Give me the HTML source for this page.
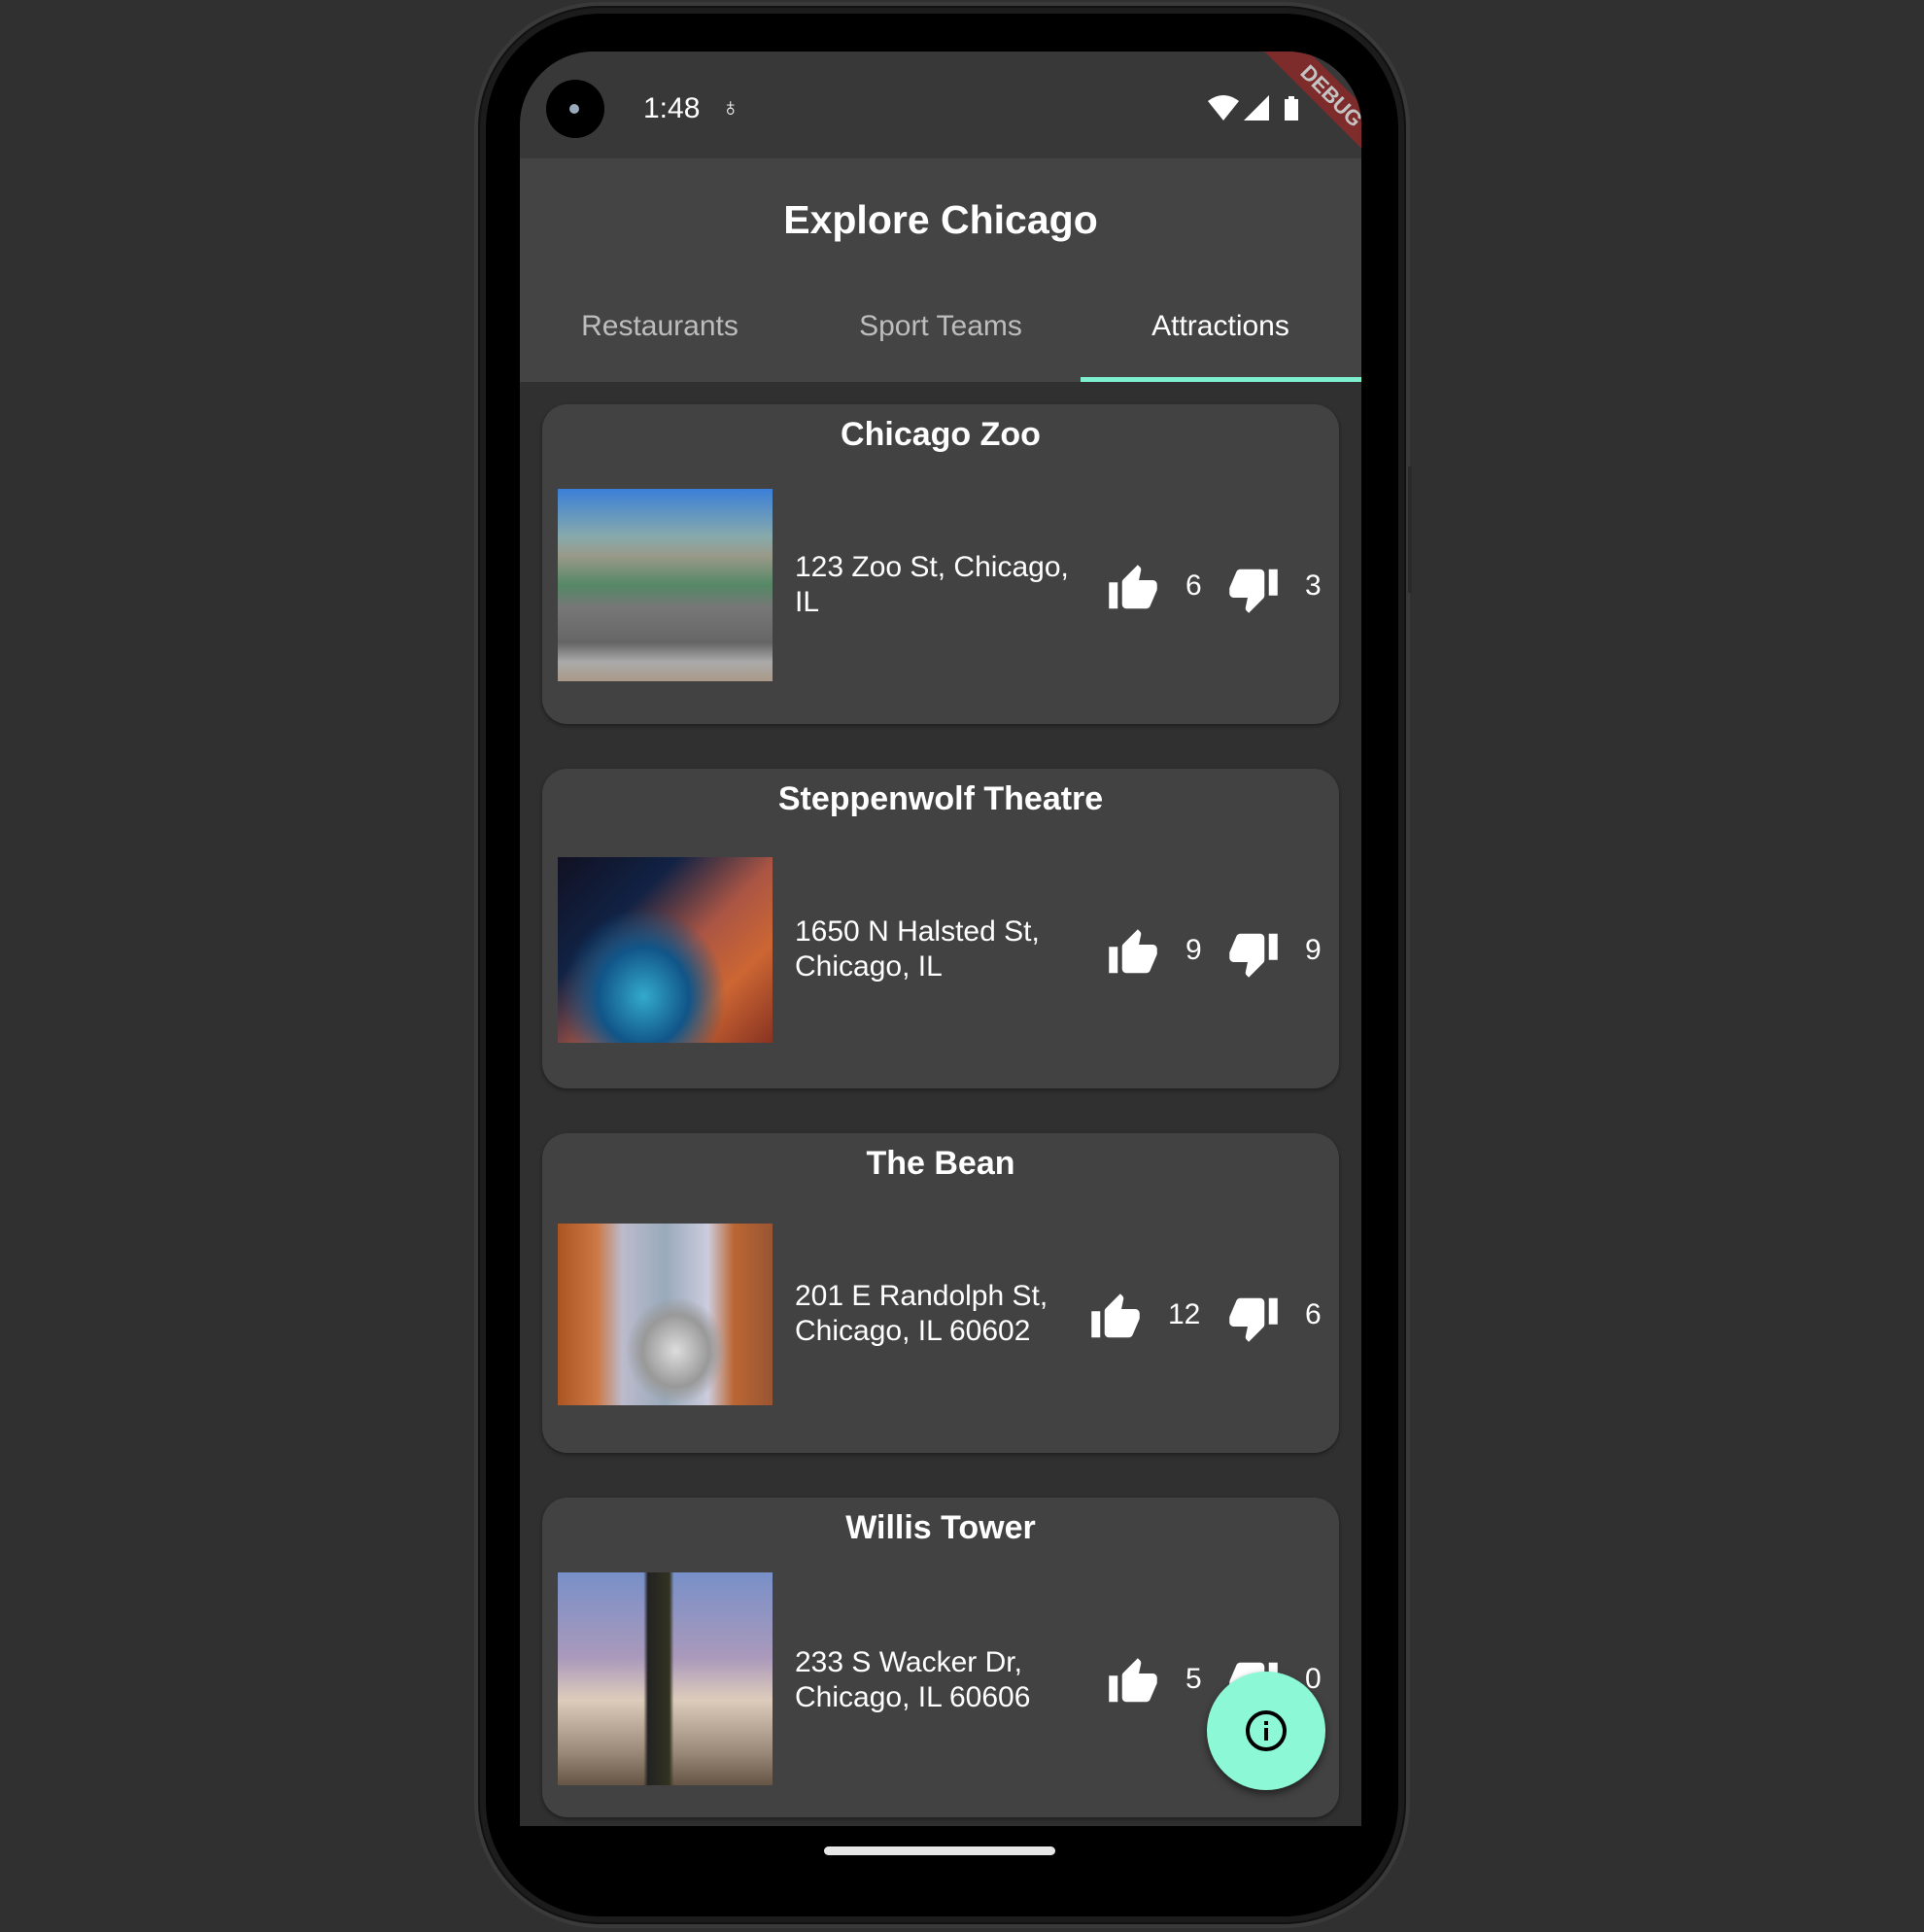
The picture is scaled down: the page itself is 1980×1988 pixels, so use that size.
<!DOCTYPE html>
<html><head><meta charset="utf-8"><style>
*{margin:0;padding:0;box-sizing:border-box}
body{width:1980px;height:1988px;background:#303030;position:relative;overflow:hidden;font-family:"Liberation Sans",Roboto,sans-serif;color:#fff}
.phone{position:absolute;left:488px;top:2px;width:963px;height:1982px;border-radius:130px;background:#000;border:4px solid #3a3a3a;box-shadow:0 0 0 2px #111 inset,0 0 0 8px #1c1c1c inset}
.screen{position:absolute;left:535px;top:53px;width:866px;height:1826px;border-radius:76px 76px 0 0;background:#303030;overflow:hidden}
.status{position:absolute;left:0;top:0;width:866px;height:110px;background:#383838}
.appbar{position:absolute;left:0;top:110px;width:866px;height:230px;background:#444}
.title{position:absolute;left:0;width:866px;top:150px;text-align:center;font-size:41px;font-weight:bold}
.tab{position:absolute;top:266px;font-size:30px;color:#bdbdbd;text-align:center;width:288px}
.ind{position:absolute;left:577px;top:335px;width:289px;height:5px;background:#7ff0cf}
.card{position:absolute;left:23px;width:820px;height:329px;background:#424242;border-radius:26px;box-shadow:0 2px 4px rgba(0,0,0,.4)}
.card h2{position:absolute;top:12px;width:100%;text-align:center;font-size:34px;font-weight:bold}
.img{position:absolute;left:16px;width:221px}
.addr{position:absolute;left:260px;font-size:30px;line-height:36px;width:300px}
.icon{position:absolute;width:54px;height:54px}
.num{position:absolute;font-size:30px}
.debug{position:absolute;left:715px;top:30px;width:240px;height:32px;background:#8b2a2a;opacity:.85;transform:rotate(45deg);transform-origin:center;color:#ddd;font-weight:bold;font-size:22px;text-align:center;line-height:32px}
</style></head><body>
<div class="phone"></div>
<div style="position:absolute;left:1449px;top:480px;width:4px;height:130px;background:#2a2a2a"></div>
<div class="screen">
 <div class="status"></div>
 <div style="position:absolute;left:27px;top:29px;width:60px;height:60px;border-radius:50%;background:#000"><div style="position:absolute;left:24px;top:25px;width:10px;height:10px;border-radius:50%;background:#9ab"></div></div>
 <div style="position:absolute;left:127px;top:42px;font-size:30px">1:48</div>
 <div style="position:absolute;left:207px;top:42px;font-size:26px">♁</div>
 <svg style="position:absolute;left:708px;top:43px" width="100" height="30" viewBox="0 0 100 30">
  <path d="M0 8 Q16 -4 32 8 L16 28Z" fill="#fff"/>
  <path d="M37 28 L63 2 L63 28Z" fill="#fff"/>
  <path d="M79 6 h4 v-3 h6 v3 h4 v22 h-14z" fill="#fff"/>
 </svg>
 <div class="appbar"></div>
 <div class="title">Explore Chicago</div>
 <div class="tab" style="left:0">Restaurants</div>
 <div class="tab" style="left:289px">Sport Teams</div>
 <div class="tab" style="left:577px;color:#fff">Attractions</div>
 <div class="ind"></div>

 <div class="card" style="top:363px"><h2>Chicago Zoo</h2>
  <div class="img" style="top:87px;height:198px;background:linear-gradient(180deg,#3a7fd8 0%,#8aa 25%,#998 35%,#586 50%,#777 62%,#666 80%,#aaa 90%,#a98 100%)"></div>
  <div class="addr" style="top:150px">123 Zoo St, Chicago,<br>IL</div>
 </div>
 <div class="card" style="top:738px"><h2>Steppenwolf Theatre</h2>
  <div class="img" style="top:91px;height:191px;background:radial-gradient(ellipse at 40% 75%,#3ac 0%,#158 25%,transparent 45%),linear-gradient(135deg,#112 0%,#124 30%,#a54 55%,#c63 75%,#832 100%)"></div>
  <div class="addr" style="top:150px">1650 N Halsted St,<br>Chicago, IL</div>
 </div>
 <div class="card" style="top:1113px"><h2>The Bean</h2>
  <div class="img" style="top:93px;height:187px;background:radial-gradient(ellipse at 55% 70%,#ddd 0%,#999 20%,transparent 30%),linear-gradient(90deg,#a52 0%,#c74 18%,#bbc 30%,#9ab 50%,#ccd 70%,#b63 82%,#953 100%)"></div>
  <div class="addr" style="top:150px">201 E Randolph St,<br>Chicago, IL 60602</div>
 </div>
 <div class="card" style="top:1488px"><h2>Willis Tower</h2>
  <div class="img" style="top:77px;height:219px;background:linear-gradient(90deg,transparent 40%,#222 42%,#332 52%,transparent 54%),linear-gradient(180deg,#7890c8 0%,#a9b 40%,#dcb 60%,#987 85%,#654 100%)"></div>
  <div class="addr" style="top:152px">233 S Wacker Dr,<br>Chicago, IL 60606</div>
 </div>

 <svg style="position:absolute;left:-20px;top:-20px;width:0;height:0"><defs>
  <path id="up" d="M1 21h4V9H1v12zm22-11c0-1.1-.9-2-2-2h-6.31l.95-4.57.03-.32c0-.41-.17-.79-.44-1.06L14.17 1 7.59 7.59C7.22 7.95 7 8.45 7 9v10c0 1.1.9 2 2 2h9c.83 0 1.54-.5 1.84-1.22l3.02-7.05c.09-.23.14-.47.14-.73v-2z"/>
  <path id="dn" d="M15 3H6c-.83 0-1.54.5-1.84 1.22l-3.02 7.05c-.09.23-.14.47-.14.73v2c0 1.1.9 2 2 2h6.31l-.95 4.57-.03.32c0 .41.17.79.44 1.06L9.83 23l6.59-6.59c.36-.36.58-.86.58-1.41V5c0-1.1-.9-2-2-2zm4 0v12h4V3h-4z"/>
 </defs></svg>

 <svg class="icon" style="left:604px;top:526px" viewBox="0 0 24 24" fill="#fff"><use href="#up"/></svg>
 <div class="num" style="left:685px;top:533px">6</div>
 <svg class="icon" style="left:728px;top:526px" viewBox="0 0 24 24" fill="#fff"><use href="#dn"/></svg>
 <div class="num" style="left:808px;top:533px">3</div>

 <svg class="icon" style="left:604px;top:901px" viewBox="0 0 24 24" fill="#fff"><use href="#up"/></svg>
 <div class="num" style="left:685px;top:908px">9</div>
 <svg class="icon" style="left:728px;top:901px" viewBox="0 0 24 24" fill="#fff"><use href="#dn"/></svg>
 <div class="num" style="left:808px;top:908px">9</div>

 <svg class="icon" style="left:586px;top:1276px" viewBox="0 0 24 24" fill="#fff"><use href="#up"/></svg>
 <div class="num" style="left:667px;top:1283px">12</div>
 <svg class="icon" style="left:728px;top:1276px" viewBox="0 0 24 24" fill="#fff"><use href="#dn"/></svg>
 <div class="num" style="left:808px;top:1283px">6</div>

 <svg class="icon" style="left:604px;top:1651px" viewBox="0 0 24 24" fill="#fff"><use href="#up"/></svg>
 <div class="num" style="left:685px;top:1658px">5</div>
 <svg class="icon" style="left:728px;top:1651px" viewBox="0 0 24 24" fill="#fff"><use href="#dn"/></svg>
 <div class="num" style="left:808px;top:1658px">0</div>

 <div style="position:absolute;left:707px;top:1667px;width:122px;height:122px;border-radius:50%;background:#8df8d6;box-shadow:0 4px 8px rgba(0,0,0,.5)">
  <svg style="position:absolute;left:37px;top:37px" width="48" height="48" viewBox="0 0 24 24"><circle cx="12" cy="12" r="9.5" fill="none" stroke="#000" stroke-width="2"/><rect x="11" y="10.5" width="2" height="6.5" fill="#000"/><rect x="11" y="7" width="2" height="2" fill="#000"/></svg>
 </div>
 <div class="debug">DEBUG</div>
</div>
<div style="position:absolute;left:535px;top:1879px;width:866px;height:60px;background:#000"></div>
<div style="position:absolute;left:848px;top:1900px;width:238px;height:9px;border-radius:5px;background:#e6e6e6"></div>
</body></html>
